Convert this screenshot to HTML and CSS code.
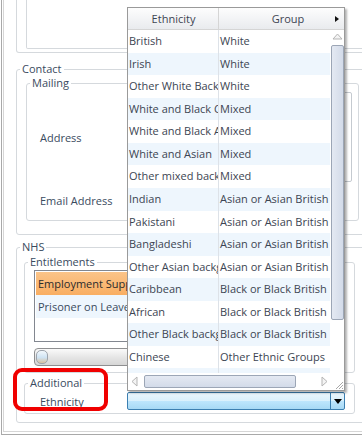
FILE: index.html
```html
<!DOCTYPE html>
<html lang="en">
<head>
    <meta charset="UTF-8">
    <title>Person Details</title>
    <link rel="stylesheet" href="styles.css">
</head>
<body>
    <div class="window">
        <div class="frame">
            <div class="top-box"><div class="top-inner"></div></div>

            <fieldset class="group contact">
                <legend>Contact</legend>
                <fieldset class="group mailing">
                    <legend>Mailing</legend>
                    <div class="field-grid">
                        <label class="field-label address-row">Address</label>
                        <div class="textbox address-box"></div>
                        <label class="field-label">Email Address</label>
                        <div class="textbox email-box"></div>
                    </div>
                </fieldset>
            </fieldset>

            <fieldset class="group nhs">
                <legend>NHS</legend>
                <fieldset class="group entitlements">
                    <legend>Entitlements</legend>
                    <div class="listbox">
                        <div class="list-item selected">Employment Support Allowance</div>
                        <div class="list-item alt">Prisoner on Leave</div>
                    </div>
                    <div class="slider"><span class="slider-knob"></span></div>
                </fieldset>
                <fieldset class="group additional">
                    <legend>Additional</legend>
                    <div class="combo-row">
                        <label class="field-label">Ethnicity</label>
                        <div class="combo">
                            <span class="combo-text"></span>
                            <span class="combo-button">
                                <svg width="8" height="5" viewBox="0 0 8 5"><path d="M0 0h8L4 5z" fill="#000"/></svg>
                            </span>
                        </div>
                    </div>
                </fieldset>
            </fieldset>
        </div>
    </div>

    <!-- dropdown of the Ethnicity combo, open over the form -->
    <div class="popup">
        <div class="sheet">
            <div class="grid-row header">
                <div class="cell">Ethnicity</div>
                <div class="cell">Group</div>
            </div>
            <div class="grid-row"><div class="cell">British</div><div class="cell">White</div></div>
            <div class="grid-row alt"><div class="cell">Irish</div><div class="cell">White</div></div>
            <div class="grid-row"><div class="cell">Other White Background</div><div class="cell">White</div></div>
            <div class="grid-row alt"><div class="cell">White and Black Caribbean</div><div class="cell">Mixed</div></div>
            <div class="grid-row"><div class="cell">White and Black African</div><div class="cell">Mixed</div></div>
            <div class="grid-row alt"><div class="cell">White and Asian</div><div class="cell">Mixed</div></div>
            <div class="grid-row"><div class="cell">Other mixed background</div><div class="cell">Mixed</div></div>
            <div class="grid-row alt"><div class="cell">Indian</div><div class="cell">Asian or Asian British</div></div>
            <div class="grid-row"><div class="cell">Pakistani</div><div class="cell">Asian or Asian British</div></div>
            <div class="grid-row alt"><div class="cell">Bangladeshi</div><div class="cell">Asian or Asian British</div></div>
            <div class="grid-row"><div class="cell">Other Asian background</div><div class="cell">Asian or Asian British</div></div>
            <div class="grid-row alt"><div class="cell">Caribbean</div><div class="cell">Black or Black British</div></div>
            <div class="grid-row"><div class="cell">African</div><div class="cell">Black or Black British</div></div>
            <div class="grid-row alt"><div class="cell">Other Black background</div><div class="cell">Black or Black British</div></div>
            <div class="grid-row"><div class="cell">Chinese</div><div class="cell">Other Ethnic Groups</div></div>
            <div class="grid-row alt"><div class="cell">Any other ethnic group</div><div class="cell">Other Ethnic Groups</div></div>
        </div>
        <div class="vscroll">
            <div class="corner-head">
                <svg width="4" height="6" viewBox="0 0 4 6"><path d="M0 0l4 3-4 3z" fill="#111"/></svg>
            </div>
            <div class="vtrack">
                <svg class="arrow-up" width="11" height="7" viewBox="0 0 11 7"><path d="M1 6L5.5 1 10 6z" fill="#f4f4f4" stroke="#b5b5b5"/></svg>
                <div class="vthumb"></div>
            </div>
        </div>
        <div class="hscroll">
            <svg width="7" height="11" viewBox="0 0 7 11"><path d="M6 1L1 5.5 6 10z" fill="#f4f4f4" stroke="#b5b5b5"/></svg>
            <div class="hthumb"></div>
            <svg class="arrow-right" width="7" height="11" viewBox="0 0 7 11"><path d="M1 1l5 4.5L1 10z" fill="#f4f4f4" stroke="#b5b5b5"/></svg>
        </div>
        <div class="grip">
            <svg width="9" height="9" viewBox="0 0 9 9"><path d="M8 1L1 8M8 4L4 8M8 7L7 8" stroke="#a8a8a8" stroke-width="1"/></svg>
        </div>
    </div>

    <div class="callout"></div>
</body>
</html>
```

FILE: styles.css
```css
* {
    box-sizing: border-box;
}
body {
    margin: 0;
    width: 362px;
    height: 440px;
    overflow: hidden;
    position: relative;
    background: #fff;
    font-family: "Open Sans", "Liberation Sans", sans-serif;
    font-size: 11px;
    color: #3a4b5e;
}
.window {
    margin-left: 1px;
    width: 420px;
    border-left: 1px solid #a9a9a9;
    border-bottom: 1px solid #a9a9a9;
    padding-left: 1px;
    padding-bottom: 2px;
}
.frame {
    height: 432px;
    border-left: 1px solid #d6d6d6;
    border-bottom: 1px solid #d6d6d6;
    padding-left: 12px;
}
.top-box {
    width: 400px;
    height: 53px;
    border: 1px solid #d5d9dd;
    border-top: 0;
    border-radius: 0 0 3px 3px;
    padding: 0 0 3px 9px;
}
.top-inner {
    height: 49px;
    border: 1px solid #d5d9dd;
    border-top: 0;
    border-radius: 0 0 2px 2px;
}

/* group boxes */
.group {
    margin: 0;
    padding: 0;
    min-width: 0;
    border: 1px solid #d5d9dd;
    border-radius: 3px;
}
.group > legend {
    margin-left: 3px;
    padding: 0 2px;
    height: 14px;
    line-height: 14px;
}
.contact {
    width: 400px;
    margin-top: 9px;
    padding-bottom: 13px;
}
.mailing {
    width: 333px;
    margin-left: 9px;
    padding: 2px 6px 10px 0;
}
.field-grid {
    display: grid;
    grid-template-columns: 100px 1fr;
    grid-template-rows: 90px 20px;
    row-gap: 8px;
    align-items: center;
}
.field-label {
    padding-left: 13px;
}
.textbox {
    height: 100%;
    border: 1px solid #c5cad0;
    border-radius: 2px;
}
.email-box {
    width: 210px;
}
.nhs {
    width: 400px;
    margin-top: 5px;
    padding-bottom: 8px;
}
.entitlements {
    width: 331px;
    margin: 1px 0 0 7px;
    padding: 1px 10px 6px 9px;
}
.entitlements > legend {
    margin-left: -6px;
}
.listbox {
    height: 72px;
    border: 1px solid #828790;
    padding: 1px;
}
.list-item {
    height: 23px;
    line-height: 23px;
    padding-left: 2px;
    white-space: nowrap;
    overflow: hidden;
}
.list-item.selected {
    background: linear-gradient(#fbc489, #f9ae62);
    color: #2b2b2b;
}
.list-item.alt {
    background: #eef6fd;
}
.slider {
    height: 18px;
    margin-top: 6px;
    border: 1px solid #8e8f91;
    border-radius: 4px;
    background: linear-gradient(#fafafa, #e6e6e6 50%, #d6d6d6);
    padding: 1px;
}
.slider-knob {
    display: block;
    width: 12px;
    height: 14px;
    border-radius: 5px;
    border: 1px solid #9da4ad;
    background: linear-gradient(#f2f8fd, #cfe3f3 55%, #d9c2a0);
}
.additional {
    width: 331px;
    margin: 3px 0 0 7px;
    padding: 2px 10px 3px 0;
}
.combo-row {
    display: grid;
    grid-template-columns: 102px 218px;
    align-items: center;
    height: 18px;
}
.combo-row .field-label {
    padding-left: 15px;
}
.combo {
    display: flex;
    height: 18px;
    border: 1px solid #3c7fb1;
    border-radius: 2px;
    background: linear-gradient(#eaf6fd, #d9f0fc 50%, #bee6fd 50%, #a7d9f5);
}
.combo-text {
    flex: 1;
}
.combo-button {
    width: 14px;
    display: flex;
    align-items: center;
    justify-content: center;
    border-left: 1px solid #3c7fb1;
}

/* ethnicity dropdown */
.popup {
    position: absolute;
    left: 127px;
    top: 7px;
    width: 218px;
    height: 384px;
    border: 1px solid #9a9a9a;
    background: #fff;
    box-shadow: 2px 2px 2px rgba(0, 0, 0, 0.3);
    display: grid;
    grid-template-columns: 1fr 14px;
    grid-template-rows: 1fr 17px;
    color: #3c4552;
}
.sheet {
    overflow: hidden;
}
.grid-row {
    display: grid;
    grid-template-columns: 91px 138px;
    height: 22.57px;
    line-height: 22.57px;
}
.grid-row.alt {
    background: #eef6fd;
}
.grid-row .cell {
    padding-left: 1px;
    white-space: nowrap;
    overflow: hidden;
}
.grid-row .cell:first-child {
    border-right: 1px solid #dde2e8;
}
.grid-row.header {
    height: 22px;
    line-height: 21px;
    border-bottom: 1px solid #d5d5d5;
    background: linear-gradient(#fdfdfd, #f3f4f6 50%, #e9ebee);
}
.grid-row.header .cell {
    text-align: center;
    border-right: 1px solid #d5d5d5;
}
.vscroll {
    grid-row: 1 / 3;
    grid-column: 2;
    display: flex;
    flex-direction: column;
}
.corner-head {
    height: 22px;
    border-bottom: 1px solid #d5d5d5;
    background: linear-gradient(#fdfdfd, #f3f4f6 50%, #e9ebee);
    display: flex;
    align-items: center;
    justify-content: center;
}
.vtrack {
    display: flex;
    flex-direction: column;
    align-items: center;
    padding-top: 3px;
}
.arrow-up {
    margin-bottom: 5px;
}
.vthumb {
    width: 13px;
    height: 275px;
    margin-left: 1px;
    border: 1px solid #9ca6b6;
    border-radius: 2px;
    background: linear-gradient(90deg, #e4e9f2, #d3dbe9);
}
.hscroll {
    display: flex;
    align-items: center;
    padding-left: 3px;
}
.hthumb {
    width: 152px;
    height: 13px;
    margin-left: 6px;
    border: 1px solid #9ca6b6;
    border-radius: 2px;
    background: linear-gradient(#e4e9f2, #d3dbe9);
}
.arrow-right {
    margin-left: 25px;
}
.grip {
    grid-row: 2;
    grid-column: 2;
    display: flex;
    align-items: flex-end;
    justify-content: flex-end;
}

/* red annotation round the Ethnicity label */
.callout {
    position: absolute;
    left: 13px;
    top: 368px;
    width: 95px;
    height: 43px;
    border: 4px solid #f00000;
    border-radius: 9px;
}
```
